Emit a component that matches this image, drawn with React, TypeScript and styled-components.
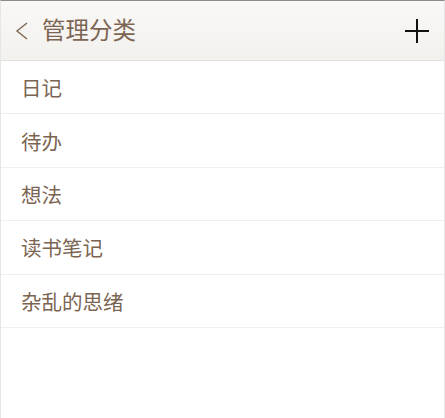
import React from 'react'
import styled, { createGlobalStyle } from 'styled-components'

const GlobalStyle = createGlobalStyle`
  html, body {
    margin: 0;
    padding: 0;
    background: #ffffff;
  }
  body {
    font-family: "Noto Sans CJK SC", "Noto Sans", sans-serif;
  }
`

const Screen = styled.div`
  width: 445px;
  height: 418px;
  box-sizing: border-box;
  border-top: 1px solid #8a8a8a;
  border-left: 1px solid #e6e6e6;
  border-right: 1px solid #e6e6e6;
  background: #ffffff;
  display: flex;
  flex-direction: column;
  overflow: hidden;
`

const TopBar = styled.div`
  height: 59px;
  flex: 0 0 59px;
  display: flex;
  align-items: center;
  padding: 0 14px 0 14px;
  background: linear-gradient(#f9f8f6, #f3f1ee);
  border-bottom: 1px solid #e4e0db;
`

const BackButton = styled.div`
  width: 14px;
  height: 20px;
  display: flex;
  align-items: center;
  margin-right: 13px;
`

const Title = styled.div`
  flex: 1;
  font-size: 23.5px;
  color: #7b6552;
  line-height: 1;
  padding-bottom: 1px;
`

const AddButton = styled.div`
  width: 26px;
  height: 26px;
  display: flex;
  align-items: center;
  justify-content: center;
`

const List = styled.div`
  display: flex;
  flex-direction: column;
`

const Row = styled.div`
  height: 52.4px;
  display: flex;
  align-items: center;
  padding-left: 20px;
  border-bottom: 1px solid #f0eeeb;
  font-size: 20.5px;
  color: #7b6552;
`

const categories = ['日记', '待办', '想法', '读书笔记', '杂乱的思绪']

export default function App() {
  return (
    <>
      <GlobalStyle />
      <Screen>
        <TopBar>
          <BackButton>
            <svg width="14" height="18" viewBox="0 0 14 18">
              <path d="M12 1 L2 9 L12 17" fill="none" stroke="#7b6552" strokeWidth="1.4" />
            </svg>
          </BackButton>
          <Title>管理分类</Title>
          <AddButton>
            <svg width="26" height="26" viewBox="0 0 26 26">
              <path d="M13 1 V25 M1 13 H25" fill="none" stroke="#111" strokeWidth="2" />
            </svg>
          </AddButton>
        </TopBar>
        <List>
          {categories.map((name) => (
            <Row key={name}>{name}</Row>
          ))}
        </List>
      </Screen>
    </>
  )
}
